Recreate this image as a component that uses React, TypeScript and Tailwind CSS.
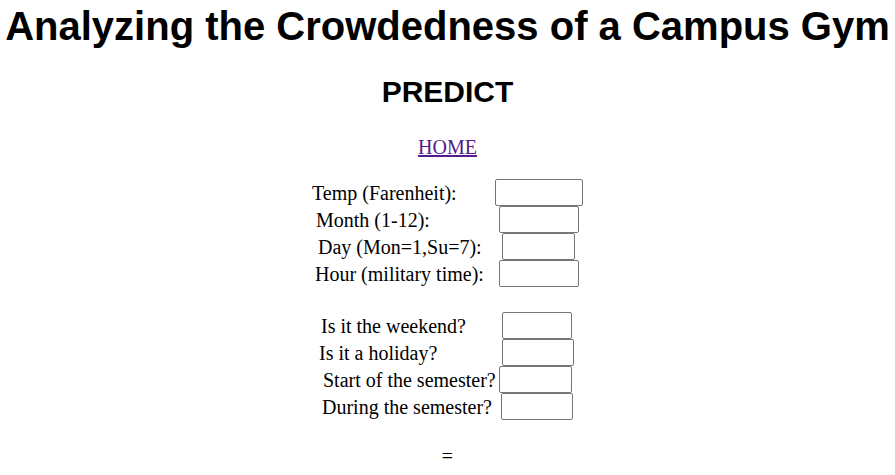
import React from "react";

const groupA = [
  { label: "Temp (Farenheit):", lc: "ml-[12px] w-[183px]", ic: "w-[88px]" },
  { label: "Month (1-12):", lc: "ml-[16px] w-[183px]", ic: "w-[80px]" },
  { label: "Day (Mon=1,Su=7):", lc: "ml-[18px] w-[184px]", ic: "w-[73px]" },
  { label: "Hour (military time):", lc: "ml-[15px] w-[184px]", ic: "w-[80px]" },
];

const groupB = [
  { label: "Is it the weekend?", lc: "ml-[21px] w-[181px]", ic: "w-[70px]" },
  { label: "Is it a holiday?", lc: "ml-[19px] w-[183px]", ic: "w-[72px]" },
  { label: "Start of the semester?", lc: "ml-[23px] w-[176px]", ic: "w-[73px]" },
  { label: "During the semester?", lc: "ml-[22px] w-[179px]", ic: "w-[72px]" },
];

function Row({ label, lc, ic }: { label: string; lc: string; ic: string }) {
  return (
    <div className="flex h-[27px] items-center">
      <span className={`${lc} shrink-0 whitespace-nowrap`}>{label}</span>
      <input
        type="text"
        className={`${ic} h-[27px] shrink-0 rounded-[2px] border border-[#767676] bg-white`}
      />
    </div>
  );
}

export default function App() {
  return (
    <div className="min-h-[475px] w-full bg-white text-black" style={{ fontFamily: '"Liberation Serif", serif' }}>
      <h1
        className="pt-[3px] text-center text-[40px] leading-[46px] font-bold whitespace-nowrap"
        style={{ fontFamily: '"Liberation Sans", Arial, sans-serif' }}
      >
        Analyzing the Crowdedness of a Campus Gym
      </h1>
      <h2
        className="mt-[26px] text-center text-[30px] leading-[34px] font-bold"
        style={{ fontFamily: '"Liberation Sans", Arial, sans-serif' }}
      >
        PREDICT
      </h2>
      <div className="mt-[27px] text-center text-[20px] leading-[23px]">
        <a href="#" className="text-[#551a8b] underline">
          HOME
        </a>
      </div>
      <div className="mx-auto mt-[20px] w-[295px] text-[20px]">
        <div className="flex flex-col">
          {groupA.map((r) => (
            <Row key={r.label} {...r} />
          ))}
        </div>
        <div className="mt-[25px] flex flex-col">
          {groupB.map((r) => (
            <Row key={r.label} {...r} />
          ))}
        </div>
      </div>
      <div className="mt-[25px] text-center text-[20px] leading-[23px]">=</div>
    </div>
  );
}
